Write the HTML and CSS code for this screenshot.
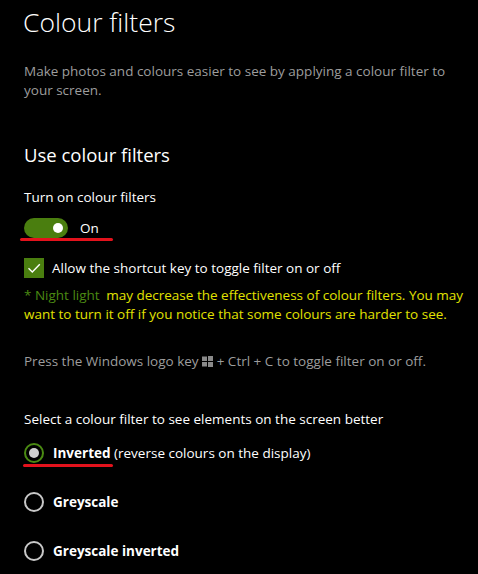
FILE: index.html
```html
<!DOCTYPE html>
<html lang="en">
<head>
    <meta charset="UTF-8">
    <meta name="viewport" content="width=device-width, initial-scale=1.0">
    <title>Colour filters</title>
    <link rel="stylesheet" href="styles.css">
</head>
<body>
    <main class="page">
        <h1>Colour filters</h1>
        <p class="desc">Make photos and colours easier to see by applying a colour filter to your screen.</p>

        <h2>Use colour filters</h2>
        <p class="label">Turn on colour filters</p>

        <!-- Interruptor -->
        <div class="toggle-row marked">
            <span class="switch"><span class="knob"></span></span>
            <span class="state">On</span>
        </div>

        <div class="check-row">
            <span class="box">
                <svg width="20" height="20" viewBox="0 0 20 20">
                    <path d="M4.5 10.2 L8.3 14 L15.8 6.2" fill="none" stroke="#fff" stroke-width="1.4"/>
                </svg>
            </span>
            <span>Allow the shortcut key to toggle filter on or off</span>
        </div>

        <p class="note"><span class="night">* Night light</span> may decrease the effectiveness of colour filters. You may want to turn it off if you notice that some colours are harder to see.</p>

        <p class="hint">Press the Windows logo key
            <svg class="win" width="11" height="11" viewBox="0 0 11 11">
                <rect x="0" y="0.5" width="5" height="4.5" fill="#8a8a8a"/>
                <rect x="6" y="0" width="5" height="5" fill="#8a8a8a"/>
                <rect x="0" y="6" width="5" height="4.5" fill="#8a8a8a"/>
                <rect x="6" y="6" width="5" height="5" fill="#8a8a8a"/>
            </svg>
            + Ctrl + C to toggle filter on or off.</p>

        <p class="label select">Select a colour filter to see elements on the screen better</p>

        <!-- Filtros -->
        <div class="radios">
            <div class="radio-row marked">
                <span class="radio checked"><span class="dot"></span></span>
                <span><strong>Inverted</strong> (reverse colours on the display)</span>
            </div>
            <div class="radio-row">
                <span class="radio"></span>
                <strong>Greyscale</strong>
            </div>
            <div class="radio-row">
                <span class="radio"></span>
                <strong>Greyscale inverted</strong>
            </div>
        </div>
    </main>
</body>
</html>
```

FILE: styles.css
```css
/* Estilo básico */
body {
    margin: 0;
    padding: 0;
    background-color: #000;
    color: #fff;
    font-family: 'Open Sans', 'Liberation Sans', sans-serif;
    font-size: 13.5px;
}

.page {
    padding: 0 12px 0 24px;
}

h1 {
    margin: 0;
    padding-top: 2px;
    font-size: 26.5px;
    font-weight: 300;
    line-height: 40px;
    margin-left: -1px;
}

.desc {
    margin: 20px 0 0;
    color: #9d9d9d;
    line-height: 19px;
}

h2 {
    margin: 42px 0 0;
    font-size: 18.5px;
    font-weight: 400;
    line-height: 26px;
}

.label {
    margin: 20px 0 0;
    line-height: 19px;
}

/* Interruptor */
.toggle-row {
    display: inline-flex;
    align-items: center;
    gap: 12px;
    margin-top: 11px;
    height: 20px;
}

.switch {
    width: 44px;
    height: 20px;
    border-radius: 10px;
    background: #4a7e0f;
    position: relative;
}

.knob {
    position: absolute;
    right: 5px;
    top: 5px;
    width: 10px;
    height: 10px;
    border-radius: 50%;
    background: #fff;
}

.marked {
    position: relative;
}

.marked::after {
    content: "";
    position: absolute;
    left: -4px;
    right: -14px;
    bottom: -3px;
    height: 3px;
    border-radius: 2px;
    background: #e3121c;
}

/* Caixa de seleção */
.check-row {
    display: flex;
    align-items: center;
    gap: 8px;
    margin-top: 16px;
}

.box {
    width: 20px;
    height: 20px;
    background: #4a7e0f;
    display: block;
}

.box svg {
    display: block;
}

.note {
    margin: 8px 0 0;
    color: #e2e200;
    line-height: 19px;
}

.night {
    color: #4b8a12;
    margin-right: 3px;
}

.hint {
    margin: 28px 0 0;
    color: #9d9d9d;
    line-height: 19px;
}

.win {
    vertical-align: -1px;
}

.select {
    margin-top: 39px;
}

/* Botões de opção */
.radios {
    margin-top: 14px;
}

.radio-row {
    display: flex;
    align-items: center;
    gap: 9px;
    height: 20px;
    margin-bottom: 29px;
}

.radio-row.marked {
    display: inline-flex;
}

.radio-row.marked::after {
    left: -1px;
    right: auto;
    width: 90px;
    bottom: -4px;
}

.radio {
    width: 16px;
    height: 16px;
    border: 2px solid #c8c8c8;
    border-radius: 50%;
    display: flex;
    align-items: center;
    justify-content: center;
    flex-shrink: 0;
}

.radio.checked {
    border-color: #4a8a12;
}

.dot {
    width: 10px;
    height: 10px;
    border-radius: 50%;
    background: #d0d0d0;
}

strong {
    font-weight: 700;
}
```
